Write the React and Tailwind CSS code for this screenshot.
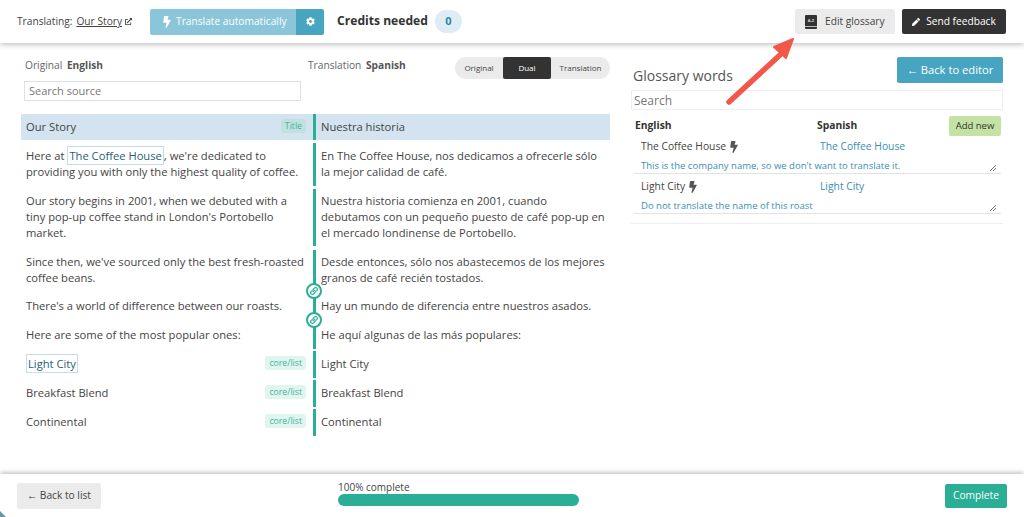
import { FaBolt, FaCog, FaLink, FaPen, FaExternalLinkAlt } from 'react-icons/fa';

const rows = [
  { src: 'Our Story', tr: 'Nuestra historia', h: 'h-[26px]', tag: 'Title', title: true },
  {
    src: (
      <>
        Here at <span className="border border-[#c5dde6] px-[1px] py-[1px] text-[#1f5f78]">The Coffee House</span>, we're dedicated to<br />
        providing you with only the highest quality of coffee.
      </>
    ),
    tr: <>En The Coffee House, nos dedicamos a ofrecerle sólo<br />la mejor calidad de café.</>,
    h: 'h-[43px] pb-[1px]',
  },
  {
    src: <>Our story begins in 2001, when we debuted with a<br />tiny pop-up coffee stand in London's Portobello<br />market.</>,
    tr: <>Nuestra historia comienza en 2001, cuando<br />debutamos con un pequeño puesto de café pop-up en<br />el mercado londinense de Portobello.</>,
    h: 'h-[58px] pb-[2px]',
  },
  {
    src: <>Since then, we've sourced only the best fresh-roasted<br />coffee beans.</>,
    tr: <>Desde entonces, sólo nos abastecemos de los mejores<br />granos de café recién tostados.</>,
    h: 'h-[41px] pb-[2px]',
    joined: true,
  },
  {
    src: "There's a world of difference between our roasts.",
    tr: 'Hay un mundo de diferencia entre nuestros asados.',
    h: 'h-[29px]',
    joined: true,
  },
  {
    src: 'Here are some of the most popular ones:',
    tr: 'He aquí algunas de las más populares:',
    h: 'h-[28px] pt-[2px]',
  },
  {
    src: <span className="border border-[#c5dde6] px-[1px] py-[1px] text-[#1f5f78]">Light City</span>,
    tr: 'Light City',
    h: 'h-[26px]',
    tag: 'core/list',
  },
  { src: 'Breakfast Blend', tr: 'Breakfast Blend', h: 'h-[26px]', tag: 'core/list' },
  { src: 'Continental', tr: 'Continental', h: 'h-[26px]', tag: 'core/list' },
];

const Row = ({ row }) => (
  <div className={`flex ${row.h} ${row.title ? 'bg-[#d3e3ef]' : ''} ${row.joined ? '' : 'mb-[3px]'}`}>
    <div className="relative flex w-[292px] items-center pl-[5px] leading-4">
      <div>{row.src}</div>
      {row.tag && (
        <span className={`absolute right-[7px] top-[5px] rounded-[3px] px-[4px] text-[8.7px] leading-[14px] text-[#3cb79c] ${row.title ? 'bg-[#c3e0e0]' : 'bg-[#e1f4ef]'}`}>
          {row.tag}
        </span>
      )}
    </div>
    <div className={`w-[3px] shrink-0 bg-[#2aae95] ${row.title ? '' : 'mb-[-1px]'}`} />
    <div className="flex flex-1 items-center pl-[5px] leading-4">
      <div>{row.tr}</div>
    </div>
  </div>
);

const LinkDot = ({ top }) => (
  <div className={`absolute left-[285px] ${top} flex h-[16px] w-[16px] items-center justify-center rounded-full border-2 border-[#2aae95] bg-white text-[8px] text-[#2aae95]`}>
    <FaLink />
  </div>
);

const GlossaryRow = ({ term, translation, note, top }) => (
  <div className={`border-b border-[#e4e4e4] ${top}`}>
    <div className="flex h-[20px] items-center pl-[7px] pt-[2px]">
      <div className="flex w-[179px] items-center gap-[2px]">
        <span>{term}</span>
        <FaBolt className="text-[12px] text-[#555]" />
      </div>
      <span className="text-[#3a8fb0]">{translation}</span>
    </div>
    <div className="relative flex h-[17px] items-center pl-[7px] pt-[3px] text-[9.5px] text-[#3a8fb0]">
      {note}
      <svg className="absolute bottom-[1px] right-[4px]" width="8" height="8" viewBox="0 0 8 8">
        <path d="M1 7 7 1M4 7 7 4" stroke="#777" strokeWidth="1" />
      </svg>
    </div>
  </div>
);

export default function App() {
  return (
    <div className="relative flex h-[517px] w-[1024px] flex-col overflow-hidden bg-white text-[11.2px] text-[#444] font-['Open_Sans',sans-serif]">
      <header className="z-10 flex h-[43px] shrink-0 items-center bg-white pl-[17px] pr-[18px] shadow-[0_1px_6px_rgba(0,0,0,0.3)]">
        <span className="text-[10.2px]">Translating:</span>
        <span className="ml-[4px] text-[10.2px] underline">Our Story</span>
        <FaExternalLinkAlt className="ml-[3px] text-[7px]" />
        <div className="ml-[18px] flex h-[26px] w-[174px] overflow-hidden rounded-[2px] text-white">
          <div className="flex flex-1 items-center gap-[3px] bg-[#8ac5d9] pl-[11px] text-[10.2px]">
            <FaBolt className="text-[12px]" />
            Translate automatically
          </div>
          <div className="flex w-[28px] items-center justify-center bg-[#48a5c2] text-[9px]">
            <FaCog />
          </div>
        </div>
        <span className="ml-[13px] text-[12.1px] font-bold text-[#333]">Credits needed</span>
        <span className="ml-[7px] flex h-[23px] w-[27px] items-center justify-center rounded-full bg-[#deedf4] text-[11px] font-bold text-[#2f86aa]">0</span>
        <button className="ml-auto flex h-[25px] w-[100px] items-center rounded-[2px] bg-[#ebebeb] pl-[10px] text-[10.2px]">
          <svg width="12" height="14" viewBox="0 0 12 14" className="mr-[8px]">
            <rect width="12" height="14" rx="1" fill="#333" />
            <rect x="0" y="11" width="12" height="1" fill="#bbb" />
            <text x="6" y="7" textAnchor="middle" fontSize="4" fontWeight="700" fill="#ddd">A-Z</text>
          </svg>
          Edit glossary
        </button>
        <button className="ml-[7px] flex h-[25px] w-[104px] items-center justify-center gap-[6px] rounded-[2px] bg-[#333] text-[10.2px] text-white">
          <FaPen className="text-[8px]" />
          Send feedback
        </button>
      </header>

      <main className="flex flex-1">
        <section className="relative ml-[21px] w-[589px] shrink-0">
          <div className="flex h-[30px] items-end pb-[1px] text-[10.2px] leading-[14px]">
            <div className="ml-[4px] w-[283px] text-[#666]">
              Original <b className="ml-[2px] text-[#555]">English</b>
            </div>
            <div className="text-[#666]">
              Translation <b className="ml-[2px] text-[#555]">Spanish</b>
            </div>
            <div className="absolute right-0 top-[14px] flex h-[22px] items-center overflow-hidden rounded-full bg-[#ebebeb] text-[8px]">
              <span className="w-[48px] text-center">Original</span>
              <span className="flex h-full w-[48px] items-center justify-center rounded-[2px] bg-[#333] text-white">Dual</span>
              <span className="w-[59px] text-center">Translation</span>
            </div>
          </div>
          <input
            className="ml-[3px] mt-[8px] block h-[20px] w-[277px] border border-[#e0e0e0] px-[4px] pb-[1px] text-[11px] placeholder:text-[#777]"
            placeholder="Search source"
          />
          <div className="mt-[13px]">
            {rows.map((row, i) => (
              <Row key={i} row={row} />
            ))}
          </div>
          <LinkDot top="top-[240px]" />
          <LinkDot top="top-[269px]" />
        </section>

        <aside className="ml-[21px] w-[372px] shrink-0">
          <div className="flex h-[40px] items-end justify-between">
            <h2 className="mb-[-3px] ml-[2px] text-[14px] text-[#555]">Glossary words</h2>
            <button className="h-[26px] w-[106px] rounded-[2px] bg-[#48a5c2] text-[11.2px] text-white">← Back to editor</button>
          </div>
          <input
            className="mt-[7px] block h-[20px] w-full border border-[#eeeeee] px-[2px] text-[12px] placeholder:text-[#777]"
            placeholder="Search"
          />
          <div className="flex h-[26px] items-center pl-[4px] pr-[2px] pt-[6px] text-[10.3px] font-bold text-[#333]">
            <span className="w-[182px]">English</span>
            <span>Spanish</span>
            <span className="ml-auto flex h-[20px] w-[52px] items-center justify-center rounded-[2px] bg-[#c3e2a4] text-[9.5px] font-normal">Add new</span>
          </div>
          <div className="ml-[3px] mr-[2px] text-[10.3px]">
            <GlossaryRow term="The Coffee House" translation="The Coffee House" note="This is the company name, so we don't want to translate it." top="" />
            <GlossaryRow term="Light City" translation="Light City" note="Do not translate the name of this roast" top="pt-[2px]" />
          </div>
          <div className="mt-[9px] border-b border-[#eeeeee]" />
        </aside>
      </main>

      <svg className="absolute left-[720px] top-[30px] z-20" width="85" height="85" viewBox="0 0 85 85">
        <path d="M9 72 60 25" stroke="#f2584a" strokeWidth="5.5" strokeLinecap="round" />
        <path d="M73 9 54 17 66 28Z" fill="#f2584a" stroke="#f2584a" strokeWidth="2" strokeLinejoin="round" />
      </svg>

      <footer className="relative z-10 flex h-[43px] shrink-0 items-center bg-white pl-[17px] pr-[17px] shadow-[0_-1px_5px_rgba(0,0,0,0.3)]">
        <button className="h-[26px] w-[84px] rounded-[2px] bg-[#ebebeb] text-[10.2px]">← Back to list</button>
        <div className="ml-[237px] w-[241px] pb-[5px]">
          <div className="text-[10px] leading-[14px]">100% complete</div>
          <div className="h-[12px] rounded-full bg-[#2aae95]" />
        </div>
        <button className="ml-auto h-[24px] w-[62px] rounded-[2px] bg-[#2aae95] text-[10.2px] text-white">Complete</button>
      </footer>
      <div className="absolute bottom-0 left-0 z-20 h-[6px] w-[6px] bg-[#6b96a3] [clip-path:polygon(0_0,0_100%,100%_100%)]" />
    </div>
  );
}
